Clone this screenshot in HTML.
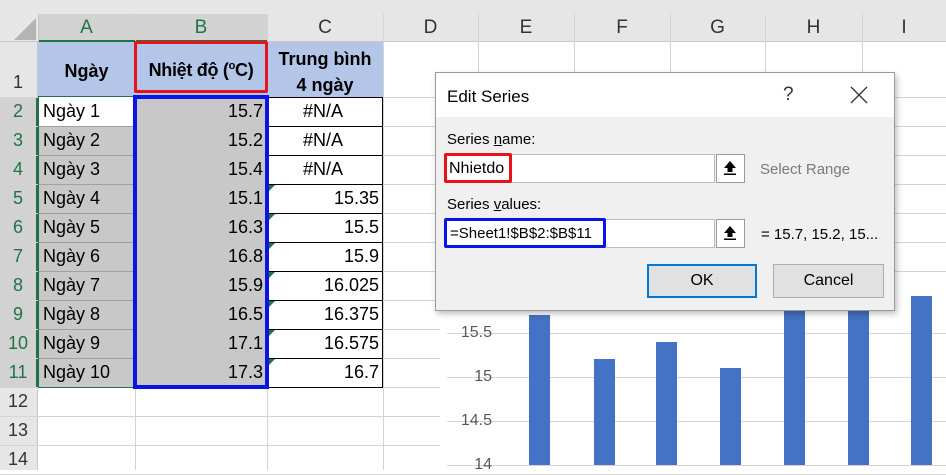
<!DOCTYPE html>
<html><head><meta charset="utf-8"><style>
*{margin:0;padding:0;box-sizing:border-box}
body{width:946px;height:470px;overflow:hidden;background:#fff;font-family:"Liberation Sans",sans-serif;position:relative}
.a{position:absolute}
.t{position:absolute;font-size:18px;color:#000;white-space:nowrap}
.gl{position:absolute;background:#d4d4d4}
</style></head><body>
<div class="a" style="left:0;top:0;width:946px;height:14px;background:#e6e6e6"></div>
<div class="a" style="left:0;top:14px;width:946px;height:28px;background:#e6e6e6;border-bottom:1px solid #c8c8c8"></div>
<div class="a" style="left:38px;top:14px;width:229px;height:28px;background:#d2d2d2;border-bottom:2px solid #217346"></div>
<svg class="a" style="left:14px;top:18px" width="22" height="22"><polygon points="22,0 22,22 0,22" fill="#b4b4b4"/></svg>
<div class="a" style="left:38px;top:14px;width:1px;height:28px;background:#c8c8c8"></div>
<div class="a" style="left:0;top:42px;width:38px;height:428px;background:#e6e6e6;border-right:1px solid #c8c8c8"></div>
<div class="a" style="left:0;top:97px;width:38px;height:290px;background:#d2d2d2;border-right:2px solid #217346"></div>
<div id="g"></div>
<script>
var cols=[38,135,267,383,478,574,670,765,862,946],L="ABCDEFGHI";
var h='';
for(var i=0;i<9;i++){var c=(i<2)?'#217346':'#333';h+='<div class="t" style="left:'+cols[i]+'px;width:'+(cols[i+1]-cols[i])+'px;top:17px;text-align:center;color:'+c+';font-size:19px">'+L[i]+'</div>';
h+='<div class="a" style="left:'+cols[i+1]+'px;top:14px;width:1px;height:456px;background:#d4d4d4"></div>';}
var rows=[42,97];for(var r=2;r<=15;r++)rows.push(97+(r-1)*29);
for(var r=1;r<=14;r++){var y=rows[r-1],hh=rows[r]-y;var c=(r>=2&&r<=11)?'#217346':'#333';
h+='<div class="t" style="left:0;width:36px;text-align:center;top:'+(y+hh-25)+'px;color:'+c+';font-size:18px">'+r+'</div>';
h+='<div class="a" style="left:0;top:'+rows[r]+'px;width:946px;height:1px;background:#d4d4d4"></div>';}
document.getElementById('g').innerHTML=h;
</script>
<div class="a" style="left:38px;top:42px;width:345px;height:55px;background:#b4c6e7"></div>
<div class="t" style="left:38px;width:97px;top:61px;text-align:center;font-weight:bold">Ngày</div>
<div class="t" style="left:135px;width:132px;top:60px;text-align:center;font-weight:bold;font-size:18px;letter-spacing:-0.3px">Nhiệt độ (<sup style="font-size:11px">o</sup>C)</div>
<div class="t" style="left:267px;width:116px;top:46px;text-align:center;font-weight:bold;line-height:26px">Trung bình<br>4 ngày</div>
<div class="a" style="left:134px;top:41px;width:134px;height:52px;border:3px solid #e8121a;border-radius:2px"></div>
<div class="a" style="left:38px;top:126px;width:97px;height:261px;background:#c8c8c8"></div>
<div class="a" style="left:135px;top:97px;width:132px;height:290px;background:#c8c8c8"></div>
<div id="d"></div>
<script>
var A=["15.7","15.2","15.4","15.1","16.3","16.8","15.9","16.5","17.1","17.3"],C=["#N/A","#N/A","#N/A","15.35","15.5","15.9","16.025","16.375","16.575","16.7"];
var h='';
for(var i=0;i<10;i++){var y=97+i*29;
h+='<div class="t" style="left:43px;top:'+(y+4)+'px">Ngày '+(i+1)+'</div>';
h+='<div class="t" style="left:135px;width:128px;text-align:right;top:'+(y+4)+'px">'+A[i]+'</div>';
h+='<div class="t" style="left:267px;width:112px;text-align:'+(i<3?'center':'right')+';top:'+(y+4)+'px">'+C[i]+'</div>';
h+='<div class="a" style="left:267px;top:'+y+'px;width:116px;height:30px;border:1px solid #000"></div>';
h+='<div class="a" style="left:38px;top:'+y+'px;width:97px;height:1px;background:#a0a0a0"></div>';
if(i>=3)h+='<svg class="a" style="left:268px;top:'+(y+1)+'px" width="7" height="7"><polygon points="0,0 7,0 0,7" fill="#1e7b33"/></svg>';}
document.getElementById('d').innerHTML=h;
</script>
<div class="a" style="left:38px;top:96px;width:97px;height:292px;border:1px solid #217346"></div>
<div class="a" style="left:39px;top:97px;width:96px;height:29px;background:#fff"></div>
<div class="t" style="left:43px;top:101px">Ngày 1</div>
<div class="a" style="left:133px;top:95px;width:136px;height:294px;border:4px solid #0a14e6"></div>
<div class="a" style="left:440px;top:300px;width:506px;height:170px;background:#fff"></div>
<div class="gl" style="left:447px;top:333px;width:499px;height:1px"></div>
<div class="gl" style="left:447px;top:377px;width:499px;height:1px"></div>
<div class="gl" style="left:447px;top:421px;width:499px;height:1px"></div>
<div class="gl" style="left:447px;top:465px;width:499px;height:1px"></div>
<div class="t" style="left:440px;width:52px;text-align:right;top:324px;font-size:16px;color:#595959">15.5</div>
<div class="t" style="left:440px;width:52px;text-align:right;top:368px;font-size:16px;color:#595959">15</div>
<div class="t" style="left:440px;width:52px;text-align:right;top:412px;font-size:16px;color:#595959">14.5</div>
<div class="t" style="left:440px;width:52px;text-align:right;top:456px;font-size:16px;color:#595959">14</div>
<div class="a" style="left:529px;top:315px;width:21px;height:150px;background:#4472c4"></div>
<div class="a" style="left:594px;top:359px;width:21px;height:106px;background:#4472c4"></div>
<div class="a" style="left:656px;top:342px;width:21px;height:123px;background:#4472c4"></div>
<div class="a" style="left:720px;top:368px;width:21px;height:97px;background:#4472c4"></div>
<div class="a" style="left:784px;top:300px;width:21px;height:165px;background:#4472c4"></div>
<div class="a" style="left:848px;top:300px;width:21px;height:165px;background:#4472c4"></div>
<div class="a" style="left:911px;top:296px;width:21px;height:169px;background:#4472c4"></div>
<div class="a" style="left:435px;top:72px;width:460px;height:239px;background:#f0f0f0;border:1px solid #9a9a9a;box-shadow:2px 3px 6px rgba(0,0,0,.25)"></div>
<div class="a" style="left:436px;top:73px;width:458px;height:44px;background:#fff"></div>
<div class="t" style="left:447px;top:87px;font-size:17px">Edit Series</div>
<div class="t" style="left:783px;top:84px;font-size:19px;color:#333">?</div>
<svg class="a" style="left:850px;top:86px" width="18" height="18"><path d="M1 1L17 17M17 1L1 17" stroke="#333" stroke-width="1.3"/></svg>
<div class="t" style="left:447px;top:131px;font-size:15px">Series <u>n</u>ame:</div>
<div class="a" style="left:445px;top:154px;width:270px;height:29px;background:#fff;border:1px solid #bcbcbc"></div>
<div class="a" style="left:716px;top:154px;width:29px;height:29px;background:#fff;border:1px solid #9a9a9a"></div>
<div class="t" style="left:449px;top:160px;font-size:16px">Nhietdo</div>
<div class="a" style="left:444px;top:153px;width:68px;height:30px;border:3px solid #e8121a;border-radius:2px"></div>
<div class="t" style="left:760px;top:161px;font-size:15px;color:#7a7a7a">Select Range</div>
<div class="t" style="left:447px;top:196px;font-size:15px">Series <u>v</u>alues:</div>
<div class="a" style="left:445px;top:219px;width:270px;height:29px;background:#fff;border:1px solid #bcbcbc"></div>
<div class="a" style="left:716px;top:219px;width:29px;height:29px;background:#fff;border:1px solid #9a9a9a"></div>
<div class="t" style="left:450px;top:225px;font-size:15px">=Sheet1!$B$2:$B$11</div>
<div class="a" style="left:444px;top:218px;width:162px;height:30px;border:3px solid #0a14e6;border-radius:2px"></div>
<div class="t" style="left:761px;top:226px;font-size:15px">= 15.7, 15.2, 15...</div>
<svg class="a" style="left:722px;top:160px" width="16" height="16"><path d="M8 1L2 8H5.5V12H10.5V8H14Z" fill="#000"/><rect x="2" y="13.5" width="12" height="1.5" fill="#000"/></svg>
<svg class="a" style="left:722px;top:225px" width="16" height="16"><path d="M8 1L2 8H5.5V12H10.5V8H14Z" fill="#000"/><rect x="2" y="13.5" width="12" height="1.5" fill="#000"/></svg>
<div class="a" style="left:647px;top:264px;width:110px;height:34px;background:#e1e1e1;border:2px solid #0078d7"></div>
<div class="t" style="left:647px;width:110px;text-align:center;top:272px;font-size:16px">OK</div>
<div class="a" style="left:773px;top:264px;width:111px;height:34px;background:#e1e1e1;border:1px solid #adadad"></div>
<div class="t" style="left:773px;width:111px;text-align:center;top:272px;font-size:16px">Cancel</div>
</body></html>
